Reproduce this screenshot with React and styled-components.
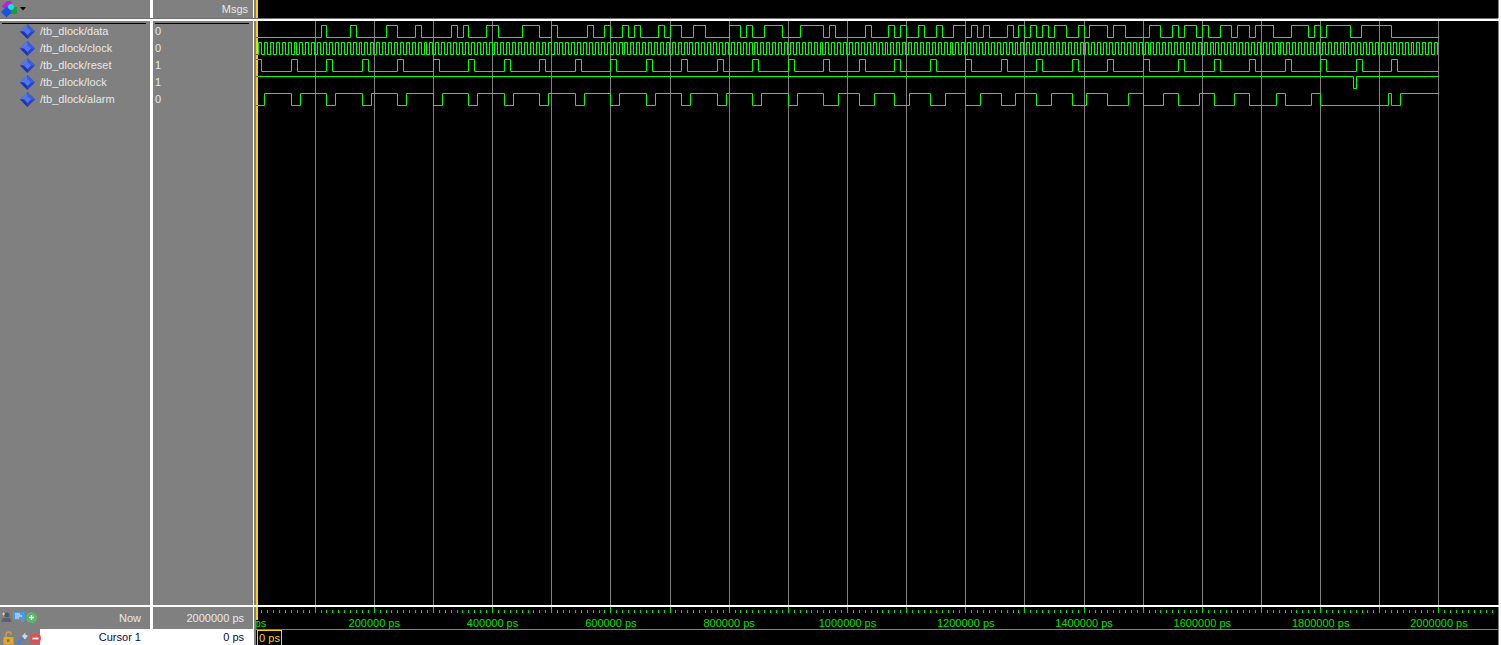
import React from 'react';
import styled, { createGlobalStyle } from 'styled-components';

const GlobalStyle = createGlobalStyle`
  html, body {
    margin: 0;
    padding: 0;
    background: #fff;
    overflow: hidden;
  }
`;

const GREEN = '#00ff00';
const YELLOW = '#ffd000';
const X0 = 255.95;
const STEP = 59.15; // pixels per 100000 ps

const Page = styled.div`
  width: 1501px;
  height: 645px;
  overflow: hidden;
  display: flex;
  flex-direction: column;
  font-family: "Liberation Sans", Arial, sans-serif;
  font-size: 11px;
  background: #fff;
`;

const Row = styled.div`
  display: grid;
  grid-template-columns: 153px 101px 1245px;
  height: ${props => props.$h}px;
  flex: none;
`;

const NamePane = styled.div`
  box-sizing: border-box;
  border-right: 3px solid #fff;
  background: #808080;
  color: #e8e8e8;
  min-width: 0;
  position: relative;
`;

const ValuePane = styled.div`
  box-sizing: border-box;
  border-right: 1px solid #fff;
  background: ${props => props.$light ? '#fff' : '#808080'};
  color: ${props => props.$light ? '#111' : '#e8e8e8'};
  min-width: 0;
`;

const WavePane = styled.div`
  box-sizing: border-box;
  border-left: 2px solid #808080;
  border-right: 1px solid #808080;
  background: #000;
  min-width: 0;
  overflow: hidden;
  position: relative;
`;

const HeaderWave = styled(WavePane)`
  &::before {
    content: '';
    display: block;
    width: 2px;
    height: 100%;
    background: ${YELLOW};
  }
`;

const Separator = styled.div`
  flex: none;
  box-sizing: border-box;
  height: ${props => props.$h}px;
  background: #fff;
  border-top: ${props => props.$edge ? '1px solid #707070' : 'none'};
  margin-right: 3px;
`;

const LogoBar = styled.div`
  display: flex;
  align-items: center;
  gap: 2px;
  height: 18px;
  padding-left: 1px;
`;

const MsgsLabel = styled.div`
  text-align: right;
  line-height: 18px;
  padding-right: 5px;
`;

const Rule = styled.div`
  height: 1px;
  background: #000;
  margin: 2px ${props => props.$r}px -1px ${props => props.$l}px;
`;

const Signal = styled.div`
  display: flex;
  align-items: center;
  height: 17px;
  line-height: 17px;
  white-space: nowrap;
  padding-left: ${props => props.$pad}px;
`;

const SignalName = styled.span`
  margin-left: 5px;
`;

const FootLabel = styled.div`
  height: 100%;
  display: flex;
  align-items: center;
  justify-content: flex-end;
  padding-right: ${props => props.$r}px;
  color: ${props => props.$dark ? '#0a0a40' : '#e8e8e8'};
`;

const IconTray = styled.div`
  position: absolute;
  top: ${props => props.$top}px;
  left: ${props => props.$left}px;
  display: flex;
  gap: ${props => props.$gap}px;
  align-items: center;
`;

const CursorCellName = styled.div`
  height: 100%;
  margin-left: 40px;
  background: #fff;
`;

const CursorWave = styled(WavePane)`
  border-top: 1px solid #808080;
`;

const CursorTag = styled.div`
  box-sizing: border-box;
  margin-left: 1px;
  width: 25px;
  height: 16px;
  border: 1px solid ${YELLOW};
  border-bottom: none;
  color: ${YELLOW};
  line-height: 15px;
  text-align: center;
`;

const WaveSvg = styled.svg`
  display: block;
  position: absolute;
  top: 0;
  left: 0;
`;

const signals = [
  { name: '/tb_dlock/data', value: '0' },
  { name: '/tb_dlock/clock', value: '0' },
  { name: '/tb_dlock/reset', value: '1' },
  { name: '/tb_dlock/lock', value: '1' },
  { name: '/tb_dlock/alarm', value: '0' },
];

// edge positions in page pixels, alternating from the starting level
const dataEdges = [321, 326, 350, 356, 386, 397, 415, 421, 451, 457, 463, 468, 486, 498, 522, 539, 551, 557, 587, 593, 604, 610, 622, 628, 634, 640, 658, 664, 670, 681, 693, 705, 729, 740, 746, 752, 764, 782, 800, 823, 829, 835, 865, 871, 888, 894, 900, 906, 918, 924, 936, 942, 953, 965, 971, 977, 983, 989, 1007, 1013, 1018, 1024, 1030, 1036, 1042, 1048, 1054, 1066, 1078, 1084, 1089, 1107, 1113, 1125, 1149, 1160, 1172, 1178, 1184, 1196, 1202, 1208, 1220, 1231, 1237, 1249, 1255, 1273, 1291, 1308, 1314, 1320, 1326, 1350, 1361, 1391];
const resetEdges = [261, 291, 297, 326, 332, 362, 368, 397, 403, 433, 439, 468, 474, 504, 510, 539, 545, 575, 581, 610, 616, 646, 652, 681, 687, 717, 723, 752, 758, 788, 794, 823, 829, 859, 865, 894, 900, 930, 936, 965, 971, 1001, 1007, 1036, 1042, 1072, 1078, 1107, 1113, 1143, 1149, 1178, 1184, 1214, 1220, 1249, 1255, 1285, 1291, 1320, 1326, 1356, 1362, 1391, 1397];
const lockEdges = [1353, 1356];
const alarmEdges = [264, 291, 300, 326, 335, 362, 371, 397, 406, 433, 442, 468, 477, 504, 513, 539, 548, 575, 584, 610, 619, 646, 655, 681, 690, 717, 726, 752, 761, 788, 797, 823, 838, 859, 874, 894, 909, 930, 945, 965, 980, 1001, 1015, 1036, 1051, 1072, 1086, 1107, 1128, 1143, 1163, 1178, 1199, 1214, 1234, 1249, 1276, 1285, 1311, 1320, 1388, 1391, 1400];
const clockEdges = Array.from({ length: 400 }, (_, i) => Math.floor(255.6 + (i + 1) * 2.955));

// build the trace of one signal from its edges
const tracePath = (edges, high, low, startHigh, startX) => {
  let level = startHigh;
  let d = `M${startX} ${(level ? high : low) + 0.5}`;
  edges.forEach(x => {
    d += `H${x + 0.5}`;
    level = !level;
    d += `V${(level ? high : low) + 0.5}`;
  });
  return d + 'H1438';
};

const traces = [
  tracePath(dataEdges, 25, 37, false, 258),
  tracePath(clockEdges, 42, 54, false, 258),
  tracePath(resetEdges, 59, 71, true, 258),
  tracePath(lockEdges, 76, 88, true, 258),
  tracePath(alarmEdges, 93, 105, false, 258),
];

const gridXs = Array.from({ length: 20 }, (_, i) => Math.floor(X0 + STEP * (i + 1)) + 0.5);
const zeroMarks = [37, 54, 59, 76, 105];

const Waves = () => (
  <WaveSvg width="1242" height="584" viewBox="256 21 1242 584">
    <g stroke="#808080" strokeWidth="1">
      {gridXs.map(x => <line key={x} x1={x} x2={x} y1="21" y2="605" />)}
    </g>
    <rect x="256" y="21" width="2" height="584" fill={YELLOW} />
    <g fill="none" stroke={GREEN} strokeWidth="1">
      {traces.map((d, i) => <path key={i} d={d} />)}
    </g>
    {zeroMarks.map(y => <rect key={y} x="256" y={y} width="2" height="1" fill="#ff2020" />)}
  </WaveSvg>
);

const rulerTicks = Array.from({ length: 210 }, (_, i) => i);
const rulerLabels = Array.from({ length: 11 }, (_, i) => i * 2);

const Ruler = () => (
  <WaveSvg width="1242" height="22" viewBox="256 607 1242 22">
    <rect x="256" y="607" width="2" height="13" fill={YELLOW} />
    <g stroke="#00e000" strokeWidth="1">
      {rulerTicks.slice(1).map(i => {
        const x = Math.floor(X0 + (STEP / 10) * i) + 0.5;
        return <line key={i} x1={x} x2={x} y1={i % 10 === 0 ? 607 : 610} y2="613" />;
      })}
    </g>
    <path d="M258 621Q256 623 258 625" fill="none" stroke="#ff2020" />
    <g fill="#00e000" fontSize="11" textAnchor="middle" fontFamily="'Liberation Sans', Arial, sans-serif">
      {rulerLabels.map(n => (
        <text key={n} x={X0 + STEP * n} y="627">{n === 0 ? '0 ps' : `${n * 100000} ps`}</text>
      ))}
    </g>
  </WaveSvg>
);

const LogoIcon = () => (
  <svg width="17" height="18" viewBox="0 0 17 18">
    <polygon points="1,6 6,1 10,1 11,3 6,8 2,8" fill="#c020d0" />
    <rect x="8" y="7" width="8" height="7" fill="#18a038" />
    <circle cx="10" cy="7" r="3" fill="#20d8e8" />
    <polygon points="5.500,6.500 11,12 5.500,17.500 0,12" fill="#1a50e8" />
  </svg>
);

const DropArrow = () => (
  <svg width="6" height="4" viewBox="0 0 6 4">
    <polygon points="0,0 6,0 3,3.500" fill="#000" />
  </svg>
);

const DiamondIcon = () => (
  <svg width="15" height="15" viewBox="0 0 15 15">
    <polygon points="7.500,0 15,7.500 7.500,15 0,7.500" fill="#2a44c8" />
    <polygon points="7.500,0 0,7.500 4,7.500 7.500,4" fill="#5878ea" />
    <polygon points="7.500,0 15,7.500 11,7.500 7.500,4" fill="#3c5cdc" />
    <polygon points="0,7.500 7.500,15 7.500,11 4,7.500" fill="#2434a8" />
    <polygon points="7.500,4 11,7.500 7.500,11 4,7.500" fill="#4f78f0" />
  </svg>
);

const AddWaveIcon = () => (
  <svg width="11" height="12" viewBox="0 0 11 12">
    <circle cx="6" cy="4" r="2.500" fill="#505868" />
    <path d="M0 11L2 7H9L11 11Z" fill="#5a6272" />
    <path d="M1 3H4M2.500 1.500V4.500" stroke="#c8d0d8" />
  </svg>
);

const MonitorIcon = () => (
  <svg width="12" height="12" viewBox="0 0 12 12">
    <rect x="0" y="1" width="12" height="8" fill="#5098e0" />
    <path d="M2 3H7M2 5H9M2 7H6" stroke="#e8f0f8" />
    <rect x="8" y="9" width="3" height="2" fill="#5098e0" />
  </svg>
);

const PlusIcon = () => (
  <svg width="11" height="11" viewBox="0 0 11 11">
    <circle cx="5.500" cy="5.500" r="5.500" fill="#58b868" />
    <path d="M3 5.500H8M5.500 3V8" stroke="#fff" strokeWidth="1.400" />
  </svg>
);

const LockIcon = () => (
  <svg width="11" height="14" viewBox="0 0 11 14">
    <path d="M3 6V3.500A2.500 2.500 0 0 1 8 3.500" fill="none" stroke="#c8a048" strokeWidth="1.500" />
    <rect x="0.500" y="6" width="10" height="7.500" fill="#e0a830" />
    <rect x="4" y="8.500" width="2.500" height="2.500" fill="#907018" />
  </svg>
);

const WrenchIcon = () => (
  <svg width="12" height="13" viewBox="0 0 12 13">
    <path d="M1.500 11.500L7 6" stroke="#4a80d8" strokeWidth="3" />
    <path d="M6 4L9.500 0.500V3L12 3.500L9 7.500Z" fill="#d0d8e4" />
  </svg>
);

const MinusIcon = () => (
  <svg width="11" height="11" viewBox="0 0 11 11">
    <circle cx="5.500" cy="5.500" r="5.500" fill="#e05050" />
    <path d="M2.500 5.500H8.500" stroke="#fff" strokeWidth="1.800" />
  </svg>
);

export default function App() {
  return (
    <Page>
      <GlobalStyle />
      <Row $h={18}>
        <NamePane>
          <LogoBar>
            <LogoIcon />
            <DropArrow />
          </LogoBar>
        </NamePane>
        <ValuePane>
          <MsgsLabel>Msgs</MsgsLabel>
        </ValuePane>
        <HeaderWave />
      </Row>
      <Separator $h={3} $edge />
      <Row $h={584}>
        <NamePane>
          <Rule $l={2} $r={4} />
          {signals.map(s => (
            <Signal key={s.name} $pad={20}>
              <DiamondIcon />
              <SignalName>{s.name}</SignalName>
            </Signal>
          ))}
        </NamePane>
        <ValuePane>
          <Rule $l={2} $r={4} />
          {signals.map(s => (
            <Signal key={s.name} $pad={2}>{s.value}</Signal>
          ))}
        </ValuePane>
        <WavePane>
          <Waves />
        </WavePane>
      </Row>
      <Separator $h={2} />
      <Row $h={22}>
        <NamePane>
          <IconTray $top={4} $left={1} $gap={1}>
            <AddWaveIcon />
            <MonitorIcon />
            <PlusIcon />
          </IconTray>
          <FootLabel $r={9}>Now</FootLabel>
        </NamePane>
        <ValuePane>
          <FootLabel $r={9}>2000000 ps</FootLabel>
        </ValuePane>
        <WavePane>
          <Ruler />
        </WavePane>
      </Row>
      <Row $h={16}>
        <NamePane>
          <IconTray $top={2} $left={3} $gap={2}>
            <LockIcon />
            <WrenchIcon />
            <MinusIcon />
          </IconTray>
          <CursorCellName>
            <FootLabel $r={9} $dark>Cursor 1</FootLabel>
          </CursorCellName>
        </NamePane>
        <ValuePane $light>
          <FootLabel $r={9} $dark>0 ps</FootLabel>
        </ValuePane>
        <CursorWave>
          <CursorTag>0 ps</CursorTag>
        </CursorWave>
      </Row>
    </Page>
  );
}
